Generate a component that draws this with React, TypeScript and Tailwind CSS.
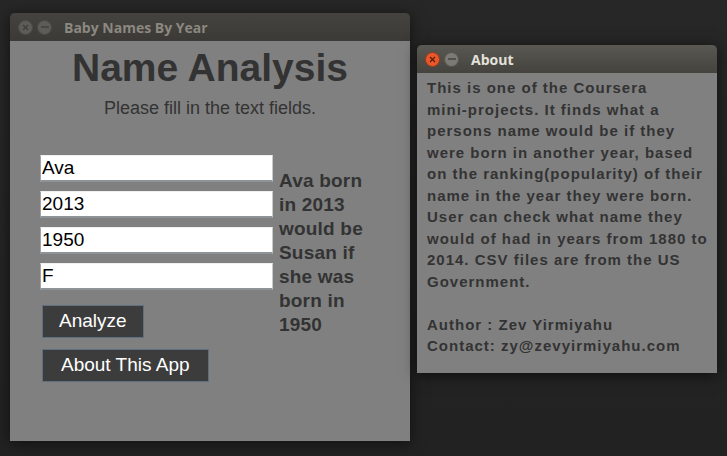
import React from "react";

const body = { fontFamily: '"Liberation Sans", Arial, sans-serif' };
const chrome = { fontFamily: '"Open Sans", "DejaVu Sans", sans-serif' };

function TitleButtons({ active }: { active: boolean }) {
  return (
    <div className="flex items-center gap-[4px]">
      <span
        className={
          "flex h-[15px] w-[15px] items-center justify-center rounded-full border text-[10px] leading-none " +
          (active
            ? "border-[#9a3a16] bg-[#e8582a] text-[#5a1a06]"
            : "border-[#4a4945] bg-[#5d5c58] text-[#3e3d3a]")
        }
      >
        <svg width="7" height="7" viewBox="0 0 7 7">
          <path d="M1 1L6 6M6 1L1 6" stroke="currentColor" strokeWidth="1.2" />
        </svg>
      </span>
      <span
        className={
          "flex h-[15px] w-[15px] items-center justify-center rounded-full border " +
          (active
            ? "border-[#55544f] bg-[#7b7a75] text-[#3d3c38]"
            : "border-[#4a4945] bg-[#5d5c58] text-[#3e3d3a]")
        }
      >
        <svg width="8" height="2" viewBox="0 0 8 2">
          <path d="M0 1H8" stroke="currentColor" strokeWidth="1.3" />
        </svg>
      </span>
    </div>
  );
}

function TitleBar({ title, active }: { title: string; active: boolean }) {
  return (
    <div
      className={
        "flex h-[28px] items-center gap-[12px] rounded-t-[5px] pl-[8px] " +
        (active
          ? "bg-gradient-to-b from-[#5a5852] to-[#45433e]"
          : "bg-gradient-to-b from-[#45433f] to-[#3b3a36]")
      }
    >
      <TitleButtons active={active} />
      <span
        style={chrome}
        className={
          "text-[14px] font-bold " + (active ? "text-[#e4e1da]" : "text-[#8b8880]")
        }
      >
        {title}
      </span>
    </div>
  );
}

function Field({ value }: { value: string }) {
  return (
    <input
      readOnly
      value={value}
      style={body}
      className="h-[27px] w-[233px] border border-t-[#f0f0f0] border-l-[#a0a4a8] border-r-[#c8cacc] border-b-2 border-b-[#8e9398] bg-white pl-[1px] text-[19px] text-black outline-none"
    />
  );
}

function Button({ label, wide }: { label: string; wide?: boolean }) {
  return (
    <button
      style={body}
      className={
        "h-[33px] self-start border border-[#5d6f80] bg-[#3c3c3c] text-[19px] text-white " +
        (wide ? "px-[18px]" : "px-[16px]")
      }
    >
      {label}
    </button>
  );
}

const resultLines = ["Ava born", "in 2013", "would be", "Susan if", "she was", "born in", "1950"];

const aboutLines = [
  "This is one of the Coursera",
  "mini-projects. It finds what a",
  "persons name would be if they",
  "were born in another year, based",
  "on the ranking(popularity) of their",
  "name in the year they were born.",
  "User can check what name they",
  "would of had in years from 1880 to",
  "2014. CSV files are from the US",
  "Government.",
  "",
  "Author : Zev Yirmiyahu",
  "Contact: zy@zevyirmiyahu.com",
];

export default function App() {
  return (
    <div className="relative h-[456px] w-[727px] overflow-hidden bg-gradient-to-b from-[#272727] to-[#222222]">
      {/* main window */}
      <div className="absolute left-[10px] top-[13px] flex h-[428px] w-[400px] flex-col shadow-[0_2px_14px_rgba(0,0,0,0.55)]">
        <TitleBar title="Baby Names By Year" active={false} />
        <div className="flex flex-1 flex-col bg-[#808080]" style={body}>
          <h1 className="mt-[7px] text-center text-[39px] font-bold leading-none text-[#333333]">
            Name Analysis
          </h1>
          <p className="mt-[12px] text-center text-[18px] leading-none text-[#333333]">
            Please fill in the text fields.
          </p>
          <div className="mt-[38px] flex pl-[30px]">
            <div className="flex flex-col">
              <div className="flex flex-col gap-[9px]">
                <Field value="Ava" />
                <Field value="2013" />
                <Field value="1950" />
                <Field value="F" />
              </div>
              <div className="ml-[2px] mt-[15px] flex flex-col gap-[11px]">
                <Button label="Analyze" />
                <Button label="About This App" wide />
              </div>
            </div>
            <div className="ml-[6px] mt-[14px] text-[19px] font-bold leading-[24px] tracking-[0.2px] text-[#333333]">
              {resultLines.map((l) => (
                <div key={l}>{l}</div>
              ))}
            </div>
          </div>
        </div>
      </div>

      {/* about window */}
      <div className="absolute left-[417px] top-[45px] flex h-[328px] w-[300px] flex-col shadow-[0_2px_14px_rgba(0,0,0,0.6)]">
        <TitleBar title="About" active={true} />
        <div
          className="flex-1 bg-[#808080] pl-[10px] pt-[4px] text-[15px] font-bold leading-[21.5px] tracking-[1px] text-[#333333]"
          style={body}
        >
          {aboutLines.map((l, i) => (
            <div key={i} className="h-[21.5px] whitespace-pre">
              {l}
            </div>
          ))}
        </div>
      </div>
    </div>
  );
}
